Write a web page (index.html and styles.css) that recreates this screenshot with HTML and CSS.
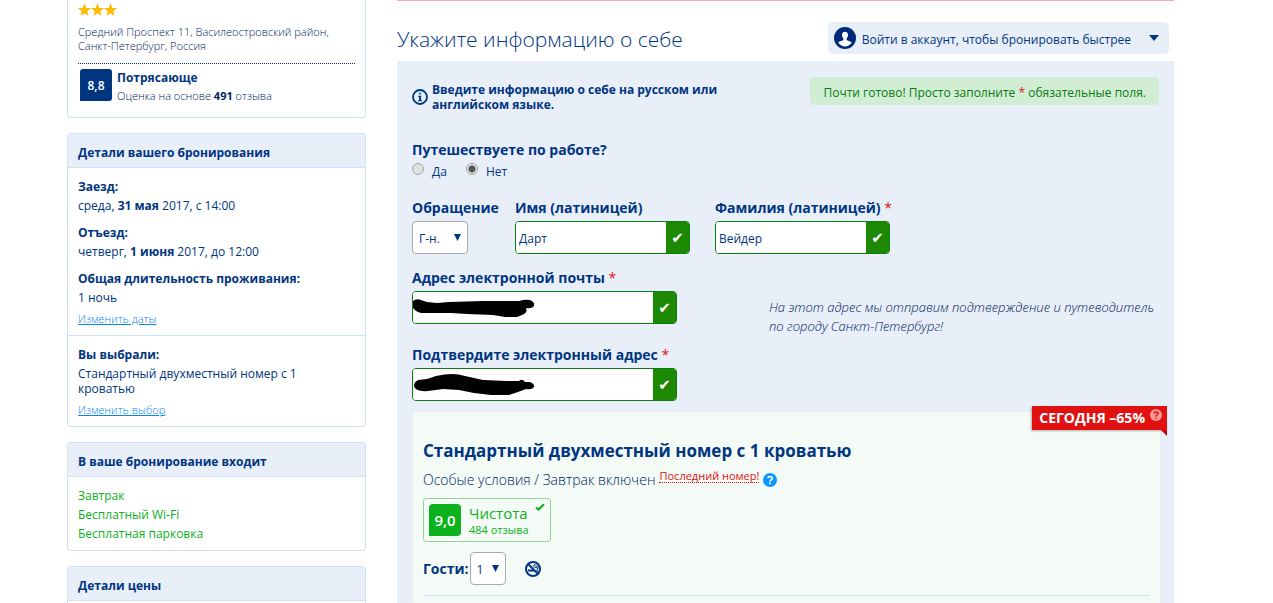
FILE: index.html
```html
<!DOCTYPE html>
<html lang="ru">
<head>
<meta charset="utf-8">
<meta name="viewport" content="width=device-width, initial-scale=1">
<title>Укажите информацию о себе</title>
<link rel="stylesheet" href="styles.css">
</head>
<body>
<div class="page">
  <aside class="sidebar">
    <section class="card hotel">
      <svg class="stars" width="40" height="14" viewBox="0 0 40 14" role="img" aria-label="3 звезды"><g fill="#feba02"><path id="star" d="M6.500 .2 8.300 4.900 13.100 5.100 9.300 8.200 10.600 13 6.500 10.300 2.400 13 3.700 8.200 -.1 5.100 4.700 4.900z"/><use href="#star" x="13"/><use href="#star" x="26"/></g></svg>
      <p class="address">Средний Проспект 11, Василеостровский район, Санкт-Петербург, Россия</p>
      <div class="rating">
        <span class="score">8,8</span>
        <div class="rating-text"><strong class="rating-word">Потрясающе</strong><span class="rating-sub">Оценка на основе <b>491</b> отзыва</span></div>
      </div>
    </section>
    <section class="card">
      <h2 class="card-title">Детали вашего бронирования</h2>
      <div class="card-body">
        <dl class="details">
          <dt>Заезд:</dt><dd>среда, <b>31 мая</b> 2017, с 14:00</dd>
          <dt>Отъезд:</dt><dd>четверг, <b>1 июня</b> 2017, до 12:00</dd>
          <dt>Общая длительность проживания:</dt><dd>1 ночь</dd>
        </dl>
        <a class="change" href="#dates">Изменить даты</a>
      </div>
      <div class="card-body card-choice">
        <dl class="details">
          <dt>Вы выбрали:</dt><dd class="room-name">Стандартный двухместный номер с 1 кроватью</dd>
        </dl>
        <a class="change" href="#room">Изменить выбор</a>
      </div>
    </section>
    <section class="card">
      <h2 class="card-title">В ваше бронирование входит</h2>
      <ul class="included"><li>Завтрак</li><li>Бесплатный Wi-Fi</li><li>Бесплатная парковка</li></ul>
    </section>
    <section class="card">
      <h2 class="card-title">Детали цены</h2>
      <div class="card-body"></div>
    </section>
  </aside>

  <main class="main">
    <header class="heading">
      <h1 class="title">Укажите информацию о себе</h1>
      <button class="login" type="button">
        <svg width="22" height="22" viewBox="0 0 22 22" aria-hidden="true"><circle cx="11" cy="11" r="11" fill="#00297a"/><path fill="#fff" d="M11 4.800c2 0 3.200 1.300 3 3.400-.1 1.500-.7 2.500-1.400 3.100v1.600c1 .8 3.400 1 4.800 2.300.3.300.2.700-.1 1.100-1.500 2-3.700 3.200-6.300 3.200s-4.800-1.200-6.300-3.200c-.3-.4-.4-.8-.1-1.100 1.400-1.300 3.800-1.500 4.800-2.300v-1.600C8.700 10.700 8.100 9.700 8 8.200c-.2-2.100 1-3.400 3-3.400z"/></svg>
        <span class="login-text">Войти в аккаунт, чтобы бронировать быстрее</span>
        <svg width="10" height="6" viewBox="0 0 10 6" aria-hidden="true"><path d="M0 0h10L5 6z" fill="#003580"/></svg>
      </button>
    </header>

    <form class="panel">
      <div class="notices">
        <p class="notice"><svg class="info" width="16" height="16" viewBox="0 0 16 16" aria-hidden="true"><circle cx="8" cy="8" r="7" fill="none" stroke="#003580" stroke-width="1.800"/><circle cx="8" cy="4.500" r="1.300" fill="#1c9be8"/><path d="M6 6.800h3.100v4.500h1.100v1H6v-1h1.100V7.800H6z" fill="#003580"/></svg><span>Введите информацию о себе на русском или английском языке.</span></p>
        <p class="ready">Почти готово! Просто заполните <span class="req">*</span> обязательные поля.</p>
      </div>

      <fieldset class="work">
        <legend class="label">Путешествуете по работе?</legend>
        <div class="choices">
          <label class="choice"><input class="radio" type="radio" name="work"><span>Да</span></label>
          <label class="choice"><input class="radio" type="radio" name="work" checked><span>Нет</span></label>
        </div>
      </fieldset>

      <div class="names">
        <div class="field"><label class="label" for="salutation">Обращение</label>
          <span class="select-wrap salutation"><select class="select" id="salutation"><option>Г-н.</option></select><svg class="arrow" width="8" height="7" viewBox="0 0 8 7" aria-hidden="true"><path d="M0 0h7L3.500 7z" fill="#003580"/></svg></span></div>
        <div class="field name"><label class="label" for="first">Имя (латиницей)</label>
          <span class="control"><input class="input" id="first" type="text" value="Дарт"><span class="ok">✔</span></span></div>
        <div class="field name"><label class="label" for="last">Фамилия (латиницей) <span class="req">*</span></label>
          <span class="control"><input class="input" id="last" type="text" value="Вейдер"><span class="ok">✔</span></span></div>
      </div>

      <div class="email-row">
        <div class="field email"><label class="label" for="email">Адрес электронной почты <span class="req">*</span></label>
          <span class="control"><input class="input" id="email" type="email"><span class="ok">✔</span>
          <svg class="scribble" width="124" height="32" viewBox="0 0 124 32" aria-hidden="true"><path d="M0 9Q3 6 8 8L14 10 24 11 36 10 70 9 106 9Q112 7 117 8 122 10 121 14 119 17 113 16 115 21 109 23L104 25H92L80 23 54 22 38 21H8Q3 20 0 16z"/></svg></span></div>
        <p class="hint">На этот адрес мы отправим подтверждение и путеводитель по городу Санкт-Петербург!</p>
      </div>

      <div class="field email"><label class="label" for="confirm">Подтвердите электронный адрес <span class="req">*</span></label>
        <span class="control"><input class="input" id="confirm" type="email"><span class="ok">✔</span>
        <svg class="scribble" width="124" height="32" viewBox="0 0 124 32" aria-hidden="true"><path d="M5 11 14 10 23 7Q40 3 52 7L70 11 94 12 106 12Q109 9 112 13L117 13Q122 15 121 18 119 21 113 20L105 23 96 26H78L61 24 46 21 30 20 15 22Q2 23 1 17 1 13 5 11z"/></svg></span></div>

      <section class="room">
        <div class="ribbon">СЕГОДНЯ –65%<svg class="ribbon-help" width="12" height="12" viewBox="0 0 12 12" aria-hidden="true"><circle cx="6" cy="6" r="6" fill="#f99"/><path d="M4 4.600Q4.100 2.900 6 2.900 8 2.900 8 4.400 8 5.300 6.900 5.900 6 6.400 6 7.400M6 8.400v1.300" fill="none" stroke="#d11" stroke-width="1.500"/></svg></div>
        <h2 class="room-title">Стандартный двухместный номер с 1 кроватью</h2>
        <div class="terms"><span>Особые условия / Завтрак включен</span><span class="last">Последний номер!</span><svg width="14" height="14" viewBox="0 0 14 14" aria-hidden="true"><circle cx="7" cy="7" r="7" fill="#0896ff"/><path d="M4.800 5.200Q5 3.500 7 3.500 9.300 3.500 9.300 5.200 9.300 6.200 8 6.900 7 7.500 7 8.600M7 9.600v1.600" fill="none" stroke="#fff" stroke-width="1.700"/></svg></div>
        <div class="clean"><span class="clean-score">9,0</span><span class="clean-text"><span class="clean-word">Чистота</span><span class="clean-sub">484 отзыва</span></span><svg class="clean-check" width="10" height="8" viewBox="0 0 10 8" aria-hidden="true"><path d="M1 4.500 3.500 6.500 9 1.300" fill="none" stroke="#0bb21b" stroke-width="2.200"/></svg></div>
        <div class="guests"><label class="label" for="guests">Гости:</label>
          <span class="select-wrap guest-count"><select class="select" id="guests"><option>1</option></select><svg class="arrow" width="8" height="7" viewBox="0 0 8 7" aria-hidden="true"><path d="M0 0h7L3.500 7z" fill="#003580"/></svg></span>
          <svg class="nosmoke" width="16" height="16" viewBox="0 0 16 16" role="img" aria-label="Номер для некурящих"><g fill="none" stroke="#003580"><path d="M3 9.500h7M11.500 9.500H13" stroke-width="2"/><path d="M12.500 8Q12.500 6 10 6.200 7.800 6.200 8 4.200M13.700 7.500Q13 4.500 10.500 4.600 9.500 4.500 9.500 3"/><path d="M3 3l10 10" stroke-width="2"/><circle cx="8" cy="8" r="7" stroke-width="2"/></g></svg>
        </div>
        <hr class="rule">
      </section>
    </form>
  </main>
</div>
</body>
</html>
```
FILE: styles.css
```css
* { box-sizing: border-box; }
body { margin: 0; background: #fff; color: #003580; font: 400 12px/19px "Open Sans", "Noto Sans", sans-serif; }
h1, h2, p, dl, dd, ul, fieldset { margin: 0; padding: 0; }
b, strong { font-weight: 700; }
svg { flex: none; display: block; }

.page { display: flex; align-items: flex-start; gap: 31px; height: 100vh; overflow: hidden; padding: 0 99px 0 67px; }

.sidebar { flex: none; width: 299px; display: flex; flex-direction: column; gap: 15px; }
.card { border: 1px solid #cde1fc; border-radius: 3px; }
.hotel { border-top: 0; border-radius: 0 0 3px 3px; padding: 3px 10px 11px; }
.address { margin: 8px 0 10px; color: #00235c; font-size: 11px; font-weight: 300; line-height: 14px; }
.rating { display: flex; gap: 5px; padding: 5px 0 0 2px; border-top: 1px dotted #003580; }
.score { width: 32px; height: 32px; border-radius: 3px 3px 3px 0; background: #003580; color: #fff; font-size: 12px; font-weight: 600; line-height: 34px; text-align: center; }
.rating-text { display: flex; flex-direction: column; }
.rating-word { font-size: 12px; line-height: 17px; }
.rating-sub { color: #00235c; font-size: 11px; font-weight: 300; line-height: 20px; }
.card-title { padding: 9px 10px 5px; border-bottom: 1px solid #cde1fc; background: #e8eff9; font-size: 12px; line-height: 19px; }
.card-body { padding: 9px 10px 6px; }
.card-choice { border-top: 1px solid #cde1fc; }
.details { margin-bottom: 2px; }
.details dt { font-weight: 700; }
.details dd { margin-bottom: 8px; }
.details dd:last-child { margin-bottom: 0; }
.details .room-name { line-height: 15px; padding: 2px 0; }
.change { display: block; margin-bottom: 1px; color: #0886f0; font-size: 11px; font-weight: 300; }
.included { padding: 9px 10px 7px; list-style: none; color: #0bb21b; }

.main { flex: 1; min-width: 0; border-top: 1px solid #ffa8a8; }
.heading { display: flex; justify-content: space-between; align-items: center; padding: 21px 5px 7px 0; }
.title { padding-top: 3px; font-size: 21px; line-height: 29px; font-weight: 300; }
.login { display: flex; align-items: center; height: 32px; padding: 0 10px 0 6px; border: 0; border-radius: 5px; background: #e8eff9; color: #003580; font: inherit; }
.login-text { margin: 3px 18px 0 6px; }

.panel { padding: 16px 15px 0; background: #e8eff9; }
.notices { display: flex; justify-content: space-between; align-items: flex-start; }
.notice { display: flex; align-items: center; gap: 4px; width: 330px; padding-top: 5px; font-weight: 700; line-height: 15px; }
.ready { padding: 6px 13px 3px; border-radius: 4px; background: #d1eed4; color: #0a7a12; }
.req { color: #e21111; font-weight: 400; }
.label { font-size: 14px; line-height: 20px; font-weight: 700; }
.work { margin-top: 28px; border: 0; }
.work .label { padding: 0; }
.choices { display: flex; gap: 19px; height: 24px; }
.choice { display: flex; gap: 8px; line-height: 24px; }
.radio { appearance: none; width: 12px; height: 12px; margin: 3px 0 0; border: 1px solid #a5a5a5; border-radius: 50%; background: #e0e0e0; }
.radio:checked { background: radial-gradient(circle, #555 0 3px, #e4e4e4 4px); }
.names { display: flex; margin-top: 14px; }
.field { display: flex; flex-direction: column; align-items: flex-start; gap: 3px; }
.names .field:first-child { width: 103px; }
.name { width: 200px; }
.name .control { width: 175px; }
.email { width: 265px; }
.email .label { white-space: nowrap; }
.control { position: relative; display: flex; width: 100%; height: 33px; overflow: hidden; border: 1px solid #0a7a12; border-radius: 4px; background: #fff; }
.input { flex: 1; min-width: 0; padding: 2px 3px 0; border: 0; background: #fff; color: #003580; font: inherit; }
.ok { flex: none; width: 23px; background: #1d8802; color: #fff; font: 15px/33px "DejaVu Sans", sans-serif; text-align: center; }
.scribble { position: absolute; left: 0; top: 0; fill: #000; }
.select-wrap { position: relative; display: block; height: 33px; }
.select { appearance: none; width: 100%; height: 100%; padding: 2px 6px 0; border: 1px solid #aaa; border-radius: 4px; background: #fff; color: #003580; font: inherit; }
.arrow { position: absolute; right: 6px; top: 13px; pointer-events: none; }
.salutation { width: 56px; }
.email-row { display: flex; justify-content: space-between; align-items: flex-end; gap: 20px; margin: 14px 0 21px; }
.email-row .hint { flex: none; width: 390px; margin-bottom: -12px; color: #00235c; font-size: 13px; font-weight: 300; font-style: italic; }

.room { position: relative; margin: 11px -1px 0 1px; padding: 28px 10px 8px; border-radius: 3px; background: #f4fbf7; }
.ribbon { position: absolute; right: -7px; top: -6px; display: flex; gap: 5px; height: 24px; padding: 0 5px 0 7px; background: #e21111; color: #fff; font-size: 14px; font-weight: 700; line-height: 24px; white-space: nowrap; box-shadow: -1px 1px 2px rgba(0, 0, 0, .3); }
.ribbon::after { content: ""; position: absolute; right: 0; top: 100%; border-top: 6px solid #c00; border-left: 6px solid transparent; }
.ribbon-help { margin-top: 3px; }
.room-title { font-size: 17px; line-height: 21px; }
.terms { display: flex; align-items: center; gap: 4px; margin-top: 8px; color: #00235c; font-size: 14px; font-weight: 300; line-height: 20px; }
.last { margin-bottom: 8px; border-bottom: 1px dotted #e21111; color: #e21111; font-size: 11px; font-weight: 400; line-height: 13px; }
.clean { position: relative; display: flex; gap: 8px; width: 128px; height: 44px; margin-top: 7px; padding: 5px; border: 1px solid #8fd898; border-radius: 3px; color: #0bb21b; }
.clean-score { width: 32px; height: 32px; border-radius: 4px 4px 4px 0; background: #0bb21b; color: #fff; font-size: 15px; font-weight: 600; line-height: 33px; text-align: center; }
.clean-text { display: flex; flex-direction: column; }
.clean-word { font-size: 15px; line-height: 19px; }
.clean-sub { font-size: 11px; line-height: 13px; }
.clean-check { position: absolute; right: 5px; top: 4px; }
.guests { display: flex; align-items: center; margin-top: 10px; }
.guest-count { width: 36px; margin: 0 19px 0 1px; }
.rule { margin: 10px 0 0; border: 0; border-top: 1px solid #cde1fc; }
```
